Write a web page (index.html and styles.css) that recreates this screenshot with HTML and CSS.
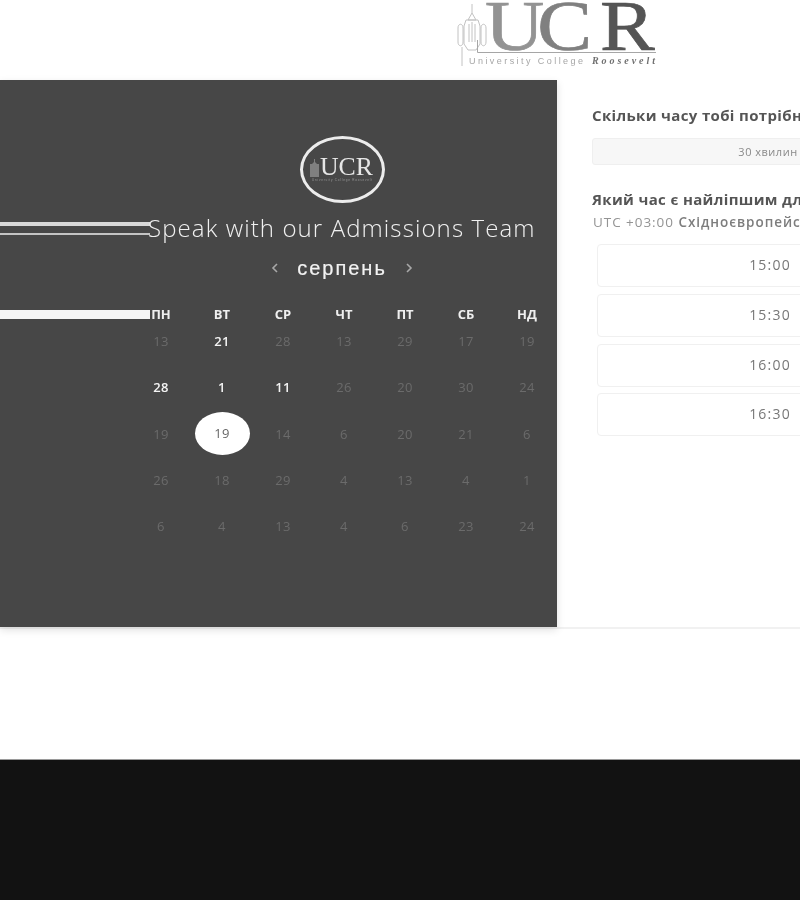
FILE: index.html
```html
<!DOCTYPE html>
<html lang="uk">
<head>
    <meta charset="UTF-8">
    <meta name="viewport" content="width=device-width, initial-scale=1.0">
    <title>Speak with our Admissions Team</title>
    <link rel="stylesheet" href="styles.css">
</head>
<body>
    <header class="top">
        <svg class="top-logo" width="204" height="70" viewBox="0 0 204 70">
            <g fill="none" stroke="#c2c2c2" stroke-width="1">
                <path d="M16 4V13M16 13L12 20H20ZM10 20H22L24 26V44L20 50H12L8 44V26Z"/>
                <path d="M2 28C2 23 7 23 7 28V42C7 47 2 47 2 42ZM25 28C25 23 30 23 30 28V42C30 47 25 47 25 42Z"/>
                <path d="M13 24V42M16 22V42M19 24V42M6 47V66"/>
            </g>
            <path d="M21.500 40V52.500H200" fill="none" stroke="#a6a6a6" stroke-width="1"/>
            <text class="logo-ucr" transform="scale(1.14 1)" y="50" x="25.400 71.300 126.300"><tspan class="logo-u">U</tspan><tspan class="logo-c">C</tspan><tspan class="logo-r">R</tspan></text>
            <text class="logo-sub" x="13" y="64" textLength="114">University College</text>
            <text class="logo-roosevelt" x="136" y="64" textLength="63">Roosevelt</text>
        </svg>
    </header>

    <main class="booking">
        <section class="calendar-panel">
            <div class="calendar">
                <div class="badge">
                    <svg width="68" height="30" viewBox="0 0 68 30">
                        <path d="M5 4V7L3 9H1V22H10V9H8L6 7V4Z" fill="#808080"/>
                        <text class="badge-ucr" y="20" x="11" textLength="53" lengthAdjust="spacingAndGlyphs">UCR</text>
                        <text class="badge-sub" x="3" y="26" textLength="60">University College Roosevelt</text>
                    </svg>
                </div>
                <div class="title-row">
                    <span class="title-streak"></span>
                    <h1>Speak with our Admissions Team</h1>
                </div>
                <div class="month-row">
                    <svg width="8" height="10" viewBox="0 0 8 10"><path d="M6 1L2 5L6 9" fill="none" stroke="#a8a8a8" stroke-width="1.600"/></svg>
                    <span class="month">серпень</span>
                    <svg width="8" height="10" viewBox="0 0 8 10"><path d="M2 1L6 5L2 9" fill="none" stroke="#a8a8a8" stroke-width="1.600"/></svg>
                </div>
                <div class="weekday-row">
                    <span class="weekday-streak"></span>
                    <div class="weekdays">
                        <span>пн</span><span>вт</span><span>ср</span><span>чт</span><span>пт</span><span>сб</span><span>нд</span>
                    </div>
                </div>
                <div class="days">
                    <span>13</span><span class="open">21</span><span>28</span><span>13</span><span>29</span><span>17</span><span>19</span>
                    <span class="open">28</span><span class="open">1</span><span class="open">11</span><span>26</span><span>20</span><span>30</span><span>24</span>
                    <span>19</span><span class="selected">19</span><span>14</span><span>6</span><span>20</span><span>21</span><span>6</span>
                    <span>26</span><span>18</span><span>29</span><span>4</span><span>13</span><span>4</span><span>1</span>
                    <span>6</span><span>4</span><span>13</span><span>4</span><span>6</span><span>23</span><span>24</span>
                </div>
            </div>
        </section>

        <section class="times-panel">
            <h2>Скільки часу тобі потрібно?</h2>
            <div class="duration">30 хвилин</div>
            <h2 class="when">Який час є найліпшим для тебе?</h2>
            <p class="zone">UTC +03:00 <b>Східноєвропейський час</b></p>
            <ul class="slots">
                <li>15:00</li>
                <li>15:30</li>
                <li>16:00</li>
                <li>16:30</li>
            </ul>
        </section>
    </main>

    <footer class="bottom"></footer>
</body>
</html>
```

FILE: styles.css
```css
html, body {
    margin: 0;
    height: 900px;
    overflow: hidden;
    background-color: #fff;
    font-family: "Liberation Sans", Arial, sans-serif;
}
body {
    filter: grayscale(1);
}
.top {
    height: 80px;
    padding-left: 456px;
    box-sizing: border-box;
}
.top-logo {
    display: block;
}
.logo-ucr {
    font-family: "Liberation Serif", serif;
    font-size: 72px;
    stroke-width: 0.7px;
}
.logo-u {
    fill: #939393;
    stroke: #939393;
}
.logo-c {
    fill: #808080;
    stroke: #808080;
}
.logo-r {
    fill: #555;
    stroke: #555;
}
.logo-sub {
    font-family: "Liberation Sans", sans-serif;
    font-size: 9px;
    fill: #a6a6a6;
}
.logo-roosevelt {
    font-family: "Liberation Serif", serif;
    font-size: 10px;
    font-style: italic;
    font-weight: bold;
    fill: #707070;
}
.booking {
    display: flex;
    height: 549px;
    border-bottom: 2px solid #f1f1f1;
    box-sizing: border-box;
}
.calendar-panel {
    width: 557px;
    flex-shrink: 0;
    background-color: #474747;
    box-shadow: 0 3px 8px rgba(0, 0, 0, 0.12);
}
.calendar {
    display: flex;
    flex-direction: column;
    padding-top: 56px;
}
.badge {
    width: 85px;
    height: 67px;
    margin-left: 300px;
    border: 3px solid #ececec;
    border-radius: 50%;
    box-sizing: border-box;
    display: flex;
    align-items: center;
    justify-content: center;
}
.badge-ucr {
    font-family: "Liberation Serif", serif;
    font-size: 25px;
    fill: #e6e6e6;
}
.badge-sub {
    font-family: "Liberation Sans", sans-serif;
    font-size: 3px;
    fill: #999;
}
.title-row {
    display: flex;
    align-items: center;
    height: 30px;
    margin-top: 9px;
}
.title-streak {
    width: 150px;
    height: 13px;
    flex-shrink: 0;
    margin-top: 2px;
    box-sizing: border-box;
    border-top: 4px solid #d8d8d8;
    border-bottom: 2px solid #c4c4c4;
}
h1 {
    margin: 0 0 0 -2px;
    font-family: "Open Sans", sans-serif;
    font-size: 24px;
    font-weight: 300;
    letter-spacing: 1.100px;
    white-space: nowrap;
    color: #f0f0f0;
}
.month-row {
    display: flex;
    align-items: center;
    justify-content: center;
    gap: 18px;
    width: 272px;
    margin-left: 206px;
    height: 30px;
    margin-top: 11px;
}
.month {
    font-size: 20px;
    color: #f2f2f2;
    letter-spacing: 2px;
    -webkit-text-stroke: 0.2px #f2f2f2;
}
.weekday-row {
    display: flex;
    align-items: center;
    height: 20px;
    margin-top: 21px;
}
.weekday-streak {
    width: 150px;
    height: 9px;
    flex-shrink: 0;
    background-color: #f6f6f6;
}
.weekdays {
    display: grid;
    grid-template-columns: repeat(7, 61px);
    margin-left: -19.500px;
    font-family: "Open Sans", sans-serif;
    font-size: 13px;
    font-weight: 700;
    text-transform: uppercase;
    text-align: center;
    color: #efefef;
}
.days {
    display: grid;
    grid-template-columns: repeat(7, 61px);
    grid-auto-rows: 30px;
    row-gap: 16.300px;
    margin-left: 130.500px;
    margin-top: 2px;
    font-family: "Open Sans", sans-serif;
    font-size: 13px;
    letter-spacing: 0.4px;
    color: #6b6b6b;
}
.days span {
    display: flex;
    align-items: center;
    justify-content: center;
}
.days .open {
    color: #f4f4f4;
    font-weight: 600;
}
.days .selected {
    width: 55px;
    height: 43px;
    align-self: center;
    justify-self: center;
    margin-top: -1px;
    border-radius: 50%;
    background-color: #fff;
    color: #666;
}
.times-panel {
    flex: 1;
    min-width: 0;
    overflow: hidden;
    padding: 26px 0 0 35px;
    color: #555;
    font-family: "Open Sans", sans-serif;
}
h2 {
    margin: 0;
    font-size: 15px;
    line-height: 18px;
    font-weight: 700;
    letter-spacing: 0.35px;
    white-space: nowrap;
}
.duration {
    width: 352px;
    height: 27px;
    line-height: 25px;
    margin-top: 14px;
    box-sizing: border-box;
    background-color: #f7f7f7;
    border: 1px solid #efefef;
    border-radius: 3px;
    text-align: center;
    font-size: 11px;
    letter-spacing: 0.5px;
    color: #8a8a8a;
}
.when {
    margin-top: 25px;
}
.zone {
    margin: 6px 0 0 1px;
    font-size: 13.500px;
    line-height: 16px;
    letter-spacing: 0.95px;
    white-space: nowrap;
    color: #949494;
}
.zone b {
    color: #7d7d7d;
    font-weight: 600;
}
.slots {
    list-style: none;
    margin: 14px 0 0 5px;
    padding: 0;
    display: flex;
    flex-direction: column;
    gap: 6.800px;
    width: 346px;
}
.slots li {
    height: 43px;
    line-height: 40px;
    box-sizing: border-box;
    border: 1px solid #f0f0f0;
    border-radius: 4px;
    text-align: center;
    font-size: 14px;
    letter-spacing: 1.200px;
    color: #777;
}
.bottom {
    height: 141px;
    margin-top: 130px;
    background-color: #121212;
    border-top: 1px solid #9a9a9a;
    box-sizing: border-box;
}
```
